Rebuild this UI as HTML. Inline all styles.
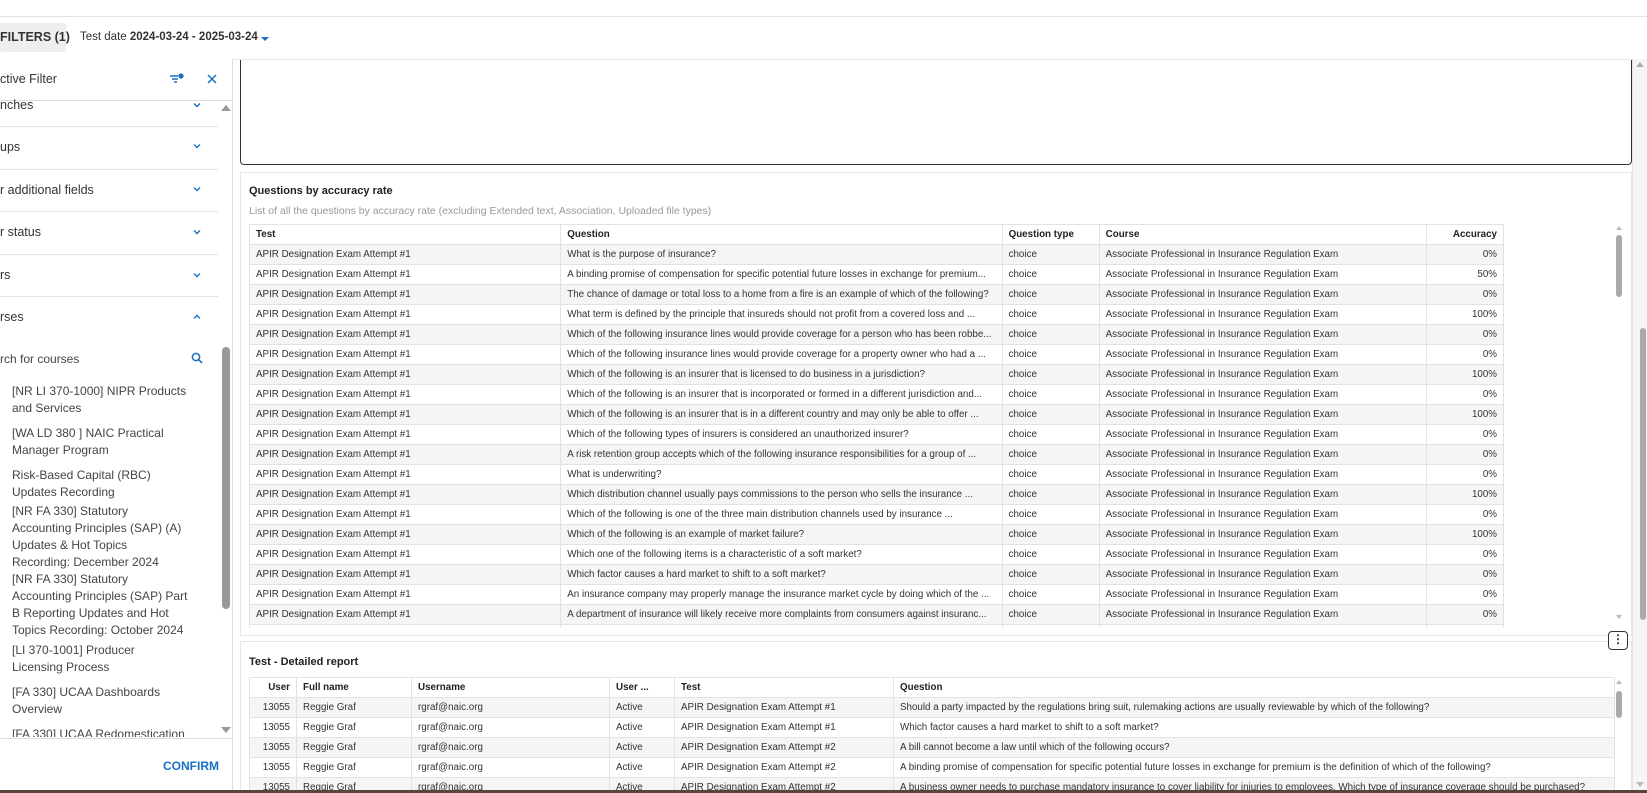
<!DOCTYPE html>
<html><head><meta charset="utf-8"><style>
*{box-sizing:border-box;margin:0;padding:0}
body{width:1647px;height:793px;overflow:hidden;background:#fff;font-family:"Liberation Sans",sans-serif;color:#333;position:relative}
.abs{position:absolute}
.hl{position:absolute;height:1px;background:#e3e3e3}
.side{position:absolute;left:0;top:59px;width:233px;height:731px;border-right:1px solid #ddd;background:#fff;overflow:hidden}
.sitem{position:absolute;left:0;width:218px;font-size:12.5px;color:#333}
.chev{position:absolute;left:193px;width:8px;height:8px}
.course{position:absolute;left:12px;font-size:12px;line-height:17px;color:#444;white-space:nowrap}
table{border-collapse:collapse;table-layout:fixed;font-size:9.8px;color:#333}
td,th{height:20px;padding:0 6px;border:1px solid #e2e2e2;white-space:nowrap;overflow:hidden;text-overflow:ellipsis;text-align:left}
th{font-weight:bold;color:#222;background:#fff}
tr:nth-child(even) td{background:#f5f5f5}
.r{text-align:right}
.card{position:absolute;left:240px;width:1392px;border:1px solid #e6e6e6;background:#fff;overflow:hidden}
.title{position:absolute;left:8px;font-size:11px;font-weight:bold;color:#222}
.sb{position:absolute;background:#aaa;border-radius:4px}
.arr{position:absolute;width:0;height:0;border-left:4px solid transparent;border-right:4px solid transparent}
</style></head><body>
<div class="hl" style="left:0;top:16px;width:1647px"></div>
<div class="abs" style="left:0;top:23px;width:66px;height:29px;background:#eee;border-radius:2px"></div>
<div class="abs" style="left:0;top:30px;font-size:12.5px;font-weight:bold;color:#333">FILTERS (1)</div>
<div class="abs" style="left:80px;top:31px;font-size:11.5px;color:#333">Test date <b>2024-03-24 - 2025-03-24</b></div>
<div class="arr" style="left:261px;top:37px;border-top:4px solid #1a6fc0"></div>

<div class="abs" style="left:240px;top:60px;width:1392px;height:105px;border:1px solid #333;border-top:none;border-radius:0 0 4px 4px"></div>
<div class="hl" style="left:0;top:59px;width:1632px"></div>

<div class="side">
 <div class="abs" style="left:0;top:13px;font-size:12.5px;color:#333">ctive Filter</div>
 <svg class="abs" style="left:169px;top:13px" width="16" height="14" viewBox="0 0 16 14"><path d="M1 4h8M3 7h6M5 10h3" stroke="#1a6fc0" stroke-width="1.4" fill="none"/><circle cx="12" cy="4" r="2.6" fill="#1a6fc0"/></svg>
 <svg class="abs" style="left:207px;top:15px" width="10" height="10" viewBox="0 0 10 10"><path d="M1 1L9 9M9 1L1 9" stroke="#1a6fc0" stroke-width="1.5"/></svg>
 <div class="hl" style="left:0;top:41px;width:233px;background:#ddd"></div>
 <div class="sitem" style="top:39px">nches</div>
 <div class="hl" style="left:0;top:67px;width:218px"></div>
 <div class="sitem" style="top:81px">ups</div>
 <div class="hl" style="left:0;top:110px;width:218px"></div>
 <div class="sitem" style="top:124px">r additional fields</div>
 <div class="hl" style="left:0;top:152px;width:218px"></div>
 <div class="sitem" style="top:166px">r status</div>
 <div class="hl" style="left:0;top:195px;width:218px"></div>
 <div class="sitem" style="top:209px">rs</div>
 <div class="hl" style="left:0;top:237px;width:218px"></div>
 <div class="sitem" style="top:251px">rses</div>
 <svg class="chev" style="top:42px" viewBox="0 0 8 8"><path d="M1 2.5L4 5.5L7 2.5" stroke="#1a6fc0" stroke-width="1.4" fill="none"/></svg>
 <svg class="chev" style="top:83px" viewBox="0 0 8 8"><path d="M1 2.5L4 5.5L7 2.5" stroke="#1a6fc0" stroke-width="1.4" fill="none"/></svg>
 <svg class="chev" style="top:126px" viewBox="0 0 8 8"><path d="M1 2.5L4 5.5L7 2.5" stroke="#1a6fc0" stroke-width="1.4" fill="none"/></svg>
 <svg class="chev" style="top:169px" viewBox="0 0 8 8"><path d="M1 2.5L4 5.5L7 2.5" stroke="#1a6fc0" stroke-width="1.4" fill="none"/></svg>
 <svg class="chev" style="top:212px" viewBox="0 0 8 8"><path d="M1 2.5L4 5.5L7 2.5" stroke="#1a6fc0" stroke-width="1.4" fill="none"/></svg>
 <svg class="chev" style="top:254px" viewBox="0 0 8 8"><path d="M1 5.5L4 2.5L7 5.5" stroke="#1a6fc0" stroke-width="1.4" fill="none"/></svg>
 <div class="abs" style="left:0;top:293px;font-size:12px;color:#444">rch for courses</div>
 <svg class="abs" style="left:191px;top:293px" width="12" height="12" viewBox="0 0 12 12"><circle cx="5" cy="5" r="3.6" stroke="#1a6fc0" stroke-width="1.5" fill="none"/><path d="M7.6 7.6L11 11" stroke="#1a6fc0" stroke-width="1.6"/></svg>
 <div class="course" style="top:324px">[NR LI 370-1000] NIPR Products<br>and Services</div>
 <div class="course" style="top:366px">[WA LD 380 ] NAIC Practical<br>Manager Program</div>
 <div class="course" style="top:408px">Risk-Based Capital (RBC)<br>Updates Recording</div>
 <div class="course" style="top:444px">[NR FA 330] Statutory<br>Accounting Principles (SAP) (A)<br>Updates &amp; Hot Topics<br>Recording: December 2024</div>
 <div class="course" style="top:512px">[NR FA 330] Statutory<br>Accounting Principles (SAP) Part<br>B Reporting Updates and Hot<br>Topics Recording: October 2024</div>
 <div class="course" style="top:583px">[LI 370-1001] Producer<br>Licensing Process</div>
 <div class="course" style="top:625px">[FA 330] UCAA Dashboards<br>Overview</div>
 <div class="course" style="top:667px;height:11px;overflow:hidden">[FA 330] UCAA Redomestication</div>
 <div class="arr" style="left:221px;top:46px;border-bottom:6px solid #999;border-left-width:5px;border-right-width:5px"></div>
 <div class="sb" style="left:222px;top:288px;width:8px;height:262px;background:#999"></div>
 <div class="arr" style="left:221px;top:668px;border-top:6px solid #999;border-left-width:5px;border-right-width:5px"></div>
 <div class="hl" style="left:0;top:679px;width:233px;background:#ddd"></div>
 <div class="abs" style="left:163px;top:700px;font-size:12px;font-weight:bold;color:#1a6fc0">CONFIRM</div>
</div>

<div class="card" style="top:172px;height:464px">
 <div class="title" style="top:12px">Questions by accuracy rate</div>
 <div class="abs" style="left:8px;top:32px;font-size:10.5px;color:#999">List of all the questions by accuracy rate (excluding Extended text, Association, Uploaded file types)</div>
 <div class="abs" style="left:8px;top:51px;width:1256px;height:404px;overflow:hidden">
 <table style="width:1255px">
 <colgroup><col style="width:311px"><col style="width:441px"><col style="width:97px"><col style="width:327px"><col style="width:77px"></colgroup>
 <tr><th>Test</th><th>Question</th><th>Question type</th><th>Course</th><th class="r">Accuracy</th></tr>
 <tr><td>APIR Designation Exam Attempt #1</td><td>What is the purpose of insurance?</td><td>choice</td><td>Associate Professional in Insurance Regulation Exam</td><td class="r">0%</td></tr>
 <tr><td>APIR Designation Exam Attempt #1</td><td>A binding promise of compensation for specific potential future losses in exchange for premium...</td><td>choice</td><td>Associate Professional in Insurance Regulation Exam</td><td class="r">50%</td></tr>
 <tr><td>APIR Designation Exam Attempt #1</td><td>The chance of damage or total loss to a home from a fire is an example of which of the following?</td><td>choice</td><td>Associate Professional in Insurance Regulation Exam</td><td class="r">0%</td></tr>
 <tr><td>APIR Designation Exam Attempt #1</td><td>What term is defined by the principle that insureds should not profit from a covered loss and ...</td><td>choice</td><td>Associate Professional in Insurance Regulation Exam</td><td class="r">100%</td></tr>
 <tr><td>APIR Designation Exam Attempt #1</td><td>Which of the following insurance lines would provide coverage for a person who has been robbe...</td><td>choice</td><td>Associate Professional in Insurance Regulation Exam</td><td class="r">0%</td></tr>
 <tr><td>APIR Designation Exam Attempt #1</td><td>Which of the following insurance lines would provide coverage for a property owner who had a ...</td><td>choice</td><td>Associate Professional in Insurance Regulation Exam</td><td class="r">0%</td></tr>
 <tr><td>APIR Designation Exam Attempt #1</td><td>Which of the following is an insurer that is licensed to do business in a jurisdiction?</td><td>choice</td><td>Associate Professional in Insurance Regulation Exam</td><td class="r">100%</td></tr>
 <tr><td>APIR Designation Exam Attempt #1</td><td>Which of the following is an insurer that is incorporated or formed in a different jurisdiction and...</td><td>choice</td><td>Associate Professional in Insurance Regulation Exam</td><td class="r">0%</td></tr>
 <tr><td>APIR Designation Exam Attempt #1</td><td>Which of the following is an insurer that is in a different country and may only be able to offer ...</td><td>choice</td><td>Associate Professional in Insurance Regulation Exam</td><td class="r">100%</td></tr>
 <tr><td>APIR Designation Exam Attempt #1</td><td>Which of the following types of insurers is considered an unauthorized insurer?</td><td>choice</td><td>Associate Professional in Insurance Regulation Exam</td><td class="r">0%</td></tr>
 <tr><td>APIR Designation Exam Attempt #1</td><td>A risk retention group accepts which of the following insurance responsibilities for a group of ...</td><td>choice</td><td>Associate Professional in Insurance Regulation Exam</td><td class="r">0%</td></tr>
 <tr><td>APIR Designation Exam Attempt #1</td><td>What is underwriting?</td><td>choice</td><td>Associate Professional in Insurance Regulation Exam</td><td class="r">0%</td></tr>
 <tr><td>APIR Designation Exam Attempt #1</td><td>Which distribution channel usually pays commissions to the person who sells the insurance ...</td><td>choice</td><td>Associate Professional in Insurance Regulation Exam</td><td class="r">100%</td></tr>
 <tr><td>APIR Designation Exam Attempt #1</td><td>Which of the following is one of the three main distribution channels used by insurance ...</td><td>choice</td><td>Associate Professional in Insurance Regulation Exam</td><td class="r">0%</td></tr>
 <tr><td>APIR Designation Exam Attempt #1</td><td>Which of the following is an example of market failure?</td><td>choice</td><td>Associate Professional in Insurance Regulation Exam</td><td class="r">100%</td></tr>
 <tr><td>APIR Designation Exam Attempt #1</td><td>Which one of the following items is a characteristic of a soft market?</td><td>choice</td><td>Associate Professional in Insurance Regulation Exam</td><td class="r">0%</td></tr>
 <tr><td>APIR Designation Exam Attempt #1</td><td>Which factor causes a hard market to shift to a soft market?</td><td>choice</td><td>Associate Professional in Insurance Regulation Exam</td><td class="r">0%</td></tr>
 <tr><td>APIR Designation Exam Attempt #1</td><td>An insurance company may properly manage the insurance market cycle by doing which of the ...</td><td>choice</td><td>Associate Professional in Insurance Regulation Exam</td><td class="r">0%</td></tr>
 <tr><td>APIR Designation Exam Attempt #1</td><td>A department of insurance will likely receive more complaints from consumers against insuranc...</td><td>choice</td><td>Associate Professional in Insurance Regulation Exam</td><td class="r">0%</td></tr>
 <tr><td>APIR Designation Exam Attempt #1</td><td>Which one of the following is the ...</td><td>choice</td><td>Associate Professional in Insurance Regulation Exam</td><td class="r">0%</td></tr>
 </table></div>
 <div class="arr" style="left:1375px;top:53px;border-bottom:4px solid #bbb;border-left-width:3px;border-right-width:3px"></div>
 <div class="sb" style="left:1375px;top:62px;width:6px;height:62px"></div>
 <div class="arr" style="left:1375px;top:442px;border-top:4px solid #bbb;border-left-width:3px;border-right-width:3px"></div>
</div>

<div class="card" style="top:641px;height:152px;border-bottom:none">
 <div class="title" style="top:14px">Test - Detailed report</div>
 <div class="abs" style="left:8px;top:35px;width:1366px;height:120px;overflow:hidden">
 <table style="width:1365px">
 <colgroup><col style="width:47px"><col style="width:115px"><col style="width:198px"><col style="width:65px"><col style="width:219px"><col style="width:721px"></colgroup>
 <tr><th class="r">User</th><th>Full name</th><th>Username</th><th>User ...</th><th>Test</th><th>Question</th></tr>
 <tr><td class="r">13055</td><td>Reggie Graf</td><td>rgraf@naic.org</td><td>Active</td><td>APIR Designation Exam Attempt #1</td><td>Should a party impacted by the regulations bring suit, rulemaking actions are usually reviewable by which of the following?</td></tr>
 <tr><td class="r">13055</td><td>Reggie Graf</td><td>rgraf@naic.org</td><td>Active</td><td>APIR Designation Exam Attempt #1</td><td>Which factor causes a hard market to shift to a soft market?</td></tr>
 <tr><td class="r">13055</td><td>Reggie Graf</td><td>rgraf@naic.org</td><td>Active</td><td>APIR Designation Exam Attempt #2</td><td>A bill cannot become a law until which of the following occurs?</td></tr>
 <tr><td class="r">13055</td><td>Reggie Graf</td><td>rgraf@naic.org</td><td>Active</td><td>APIR Designation Exam Attempt #2</td><td>A binding promise of compensation for specific potential future losses in exchange for premium is the definition of which of the following?</td></tr>
 <tr><td class="r">13055</td><td>Reggie Graf</td><td>rgraf@naic.org</td><td>Active</td><td>APIR Designation Exam Attempt #2</td><td>A business owner needs to purchase mandatory insurance to cover liability for injuries to employees. Which type of insurance coverage should be purchased?</td></tr>
 </table></div>
 <div class="arr" style="left:1375px;top:38px;border-bottom:4px solid #bbb;border-left-width:3px;border-right-width:3px"></div>
 <div class="sb" style="left:1375px;top:49px;width:6px;height:27px"></div>
</div>
<div class="abs" style="left:1608px;top:631px;width:20px;height:19px;border:1px solid #333;border-radius:4px;background:#fff;text-align:center;font-size:12px;line-height:15px;font-weight:bold;z-index:5">&#8942;</div>

<div class="abs" style="left:1632px;top:59px;width:15px;height:731px;background:#f5f5f5;border-left:1px solid #e3e3e3"></div>
<div class="arr" style="left:1636px;top:62px;border-bottom:5px solid #aaa"></div>
<div class="sb" style="left:1640px;top:328px;width:6px;height:292px"></div>
<div class="arr" style="left:1636px;top:782px;border-top:5px solid #bbb"></div>
<div class="abs" style="left:0;top:790px;width:1647px;height:3px;background:#5a4636"></div>
</body></html>
